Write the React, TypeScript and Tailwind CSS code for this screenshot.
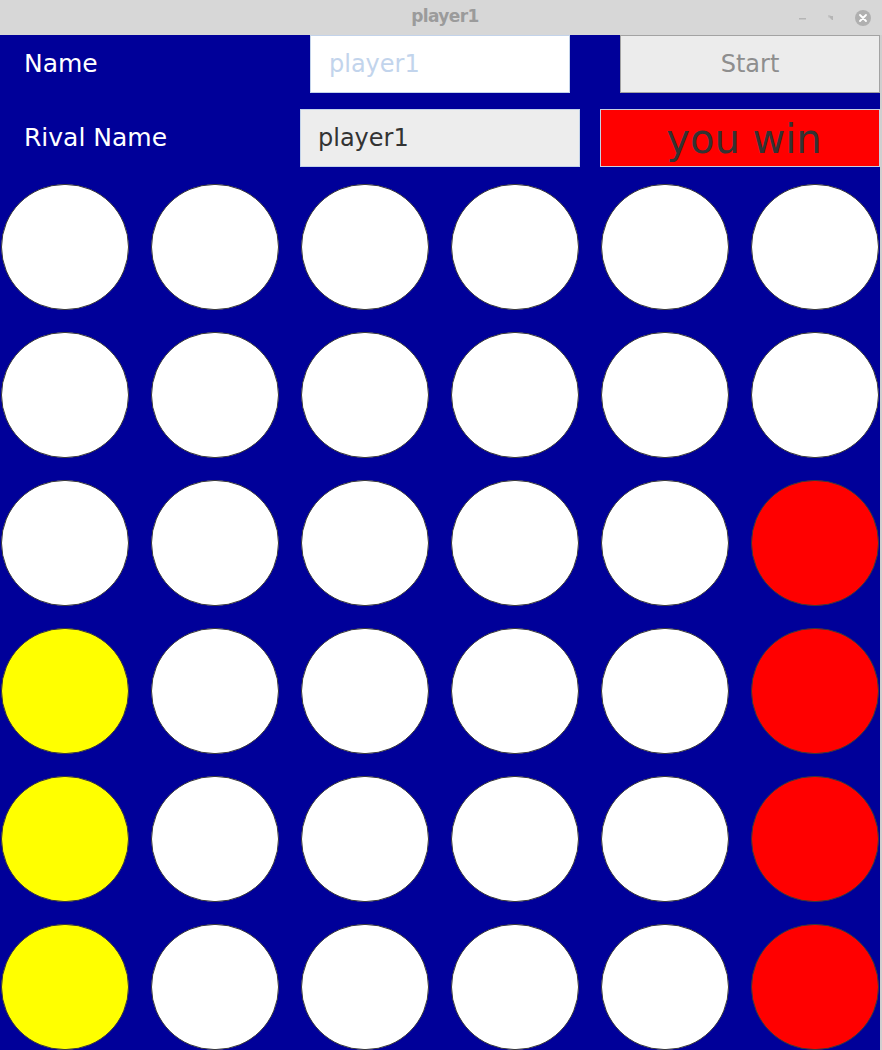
import React from 'react';

type Cell = 'w' | 'y' | 'r';

const board: Cell[][] = [
  ['w', 'w', 'w', 'w', 'w', 'w'],
  ['w', 'w', 'w', 'w', 'w', 'w'],
  ['w', 'w', 'w', 'w', 'w', 'r'],
  ['y', 'w', 'w', 'w', 'w', 'r'],
  ['y', 'w', 'w', 'w', 'w', 'r'],
  ['y', 'w', 'w', 'w', 'w', 'r'],
];

const fill: Record<Cell, string> = {
  w: 'bg-white',
  y: 'bg-[#ffff00]',
  r: 'bg-[#ff0000]',
};

const TitleBar: React.FC = () => (
  <div className="relative h-[35px] shrink-0 bg-[#d7d7d7] flex items-center justify-center">
    <span className="text-[17px] font-bold text-[#9b9b9b] tracking-[-0.6px] ml-[8px] pb-[1px]">player1</span>
    <div className="absolute right-[10px] top-0 h-full flex items-center gap-[18px]">
      <svg width="10" height="10" viewBox="0 0 10 10">
        <rect x="1" y="5" width="7" height="1.5" fill="#b5b5b5" />
      </svg>
      <svg width="10" height="10" viewBox="0 0 10 10">
        <path d="M2 3 L6 7 L7 7 L7 3 Z M3 2 L7 2" fill="#b5b5b5" />
        <path d="M2 2 L5 2 L2 5 Z" fill="#c5c5c5" />
      </svg>
      <svg width="18" height="18" viewBox="0 0 18 18">
        <circle cx="9" cy="9" r="8" fill="#b0b0b0" />
        <path d="M6 6 L12 12 M12 6 L6 12" stroke="#ffffff" strokeWidth="1.8" strokeLinecap="round" />
      </svg>
    </div>
  </div>
);

const App: React.FC = () => {
  return (
    <div className="w-[882px] h-[1050px] overflow-hidden flex flex-col font-['DejaVu_Sans',sans-serif]">
      <TitleBar />
      <div className="flex flex-1 min-h-0">
        <div className="w-[880px] bg-[#000099] flex flex-col overflow-hidden">
          <div className="h-[58px] shrink-0 flex items-stretch">
            <div className="w-[310px] pl-[24px] flex items-center text-white text-[25px]">Name</div>
            <div className="w-[260px] bg-white border border-[#c3d3ea] pl-[18px] flex items-center text-[24px] text-[#c2d4ec]">
              player1
            </div>
            <div className="w-[50px]" />
            <div className="w-[260px] bg-[#ececec] border border-[#a3a3a3] flex items-center justify-center text-[24px] text-[#8e8e8e]">
              Start
            </div>
          </div>
          <div className="h-[58px] shrink-0 mt-[16px] flex items-stretch">
            <div className="w-[300px] pl-[24px] flex items-center text-white text-[25px]">Rival Name</div>
            <div className="w-[280px] bg-[#ededed] border border-[#c3d3ea] pl-[17px] flex items-center text-[24px] text-[#333333]">
              player1
            </div>
            <div className="w-[20px]" />
            <div className="w-[280px] bg-[#ff0000] border border-[#c8d0e0] flex items-center justify-center text-[40px] text-[#333333] pt-[2px] pl-[8px]">
              you win
            </div>
          </div>
          <div className="mt-[6px] shrink-0 grid grid-cols-[repeat(6,150px)] auto-rows-[148px]">
            {board.flatMap((row, r) =>
              row.map((c, i) => (
                <div key={`${r}-${i}`} className="flex items-center pl-[1px]">
                  <div className={`w-[128px] h-[126px] rounded-full border border-[#3a3a3a] ${fill[c]}`} />
                </div>
              ))
            )}
          </div>
        </div>
        <div className="w-[2px] bg-[#cfcfcf]" />
      </div>
    </div>
  );
};

export default App;
